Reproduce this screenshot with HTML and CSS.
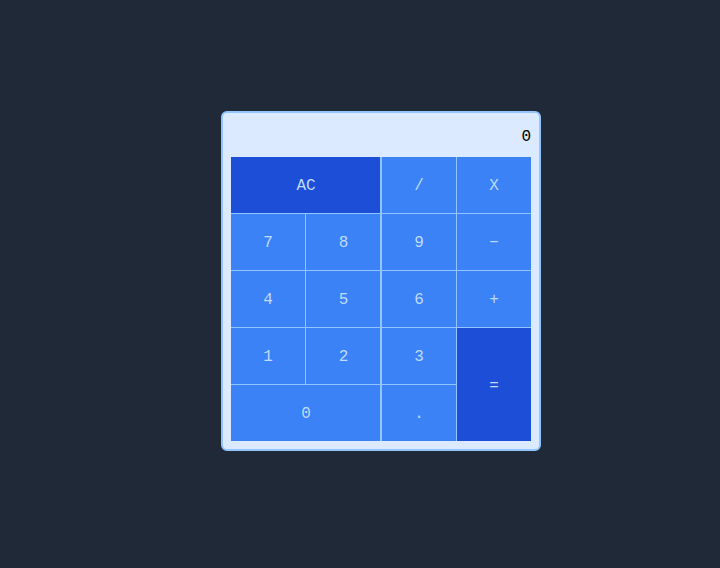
FILE: index.html
```html
<!DOCTYPE html>
<html>
<head>
<meta charset="utf-8">
<link rel="stylesheet" href="styles.css">
</head>
<body>
<div class="stage">
  <div class="calc">
    <div class="display">0</div>
    <div class="keys">
      <button class="key dark span2 edge">AC</button>
      <button class="key">/</button>
      <button class="key">X</button>
      <button class="key">7</button>
      <button class="key edge">8</button>
      <button class="key">9</button>
      <button class="key">&minus;</button>
      <button class="key">4</button>
      <button class="key edge">5</button>
      <button class="key">6</button>
      <button class="key">+</button>
      <button class="key">1</button>
      <button class="key edge">2</button>
      <button class="key">3</button>
      <button class="key dark tall">=</button>
      <button class="key span2 edge">0</button>
      <button class="key">.</button>
    </div>
  </div>
</div>
</body>
</html>
```
FILE: styles.css
```css
html, body {
  margin: 0;
  padding: 0;
  background: #1f2937;
  height: 100%;
}
.stage {
  padding: 111px 0 0 221px;
}
.calc {
  box-sizing: border-box;
  width: 320px;
  height: 340px;
  background: #dbeafe;
  border: 2px solid #93c5fd;
  border-radius: 6px;
  padding: 8px;
  display: flex;
  flex-direction: column;
}
.display {
  height: 36px;
  line-height: 32px;
  text-align: right;
  font-family: "Liberation Mono", monospace;
  font-size: 16px;
  color: #000;
}
.keys {
  display: grid;
  grid-template-columns: 74px 75px 74px 74px;
  grid-template-rows: repeat(5, 56px);
  gap: 1px;
  background: #93c5fd;
  width: 300px;
}
.key {
  border: 0;
  margin: 0;
  padding: 2px 0 0;
  background: #3b82f6;
  color: #bfdbfe;
  font-family: "Liberation Mono", monospace;
  font-size: 16px;
}
.key.dark {
  background: #1d4ed8;
}
.key.edge {
  box-shadow: inset -1px 0 0 #93c5fd;
}
.span2 {
  grid-column: span 2;
}
.tall {
  grid-column: 4;
  grid-row: 4 / span 2;
}
```
